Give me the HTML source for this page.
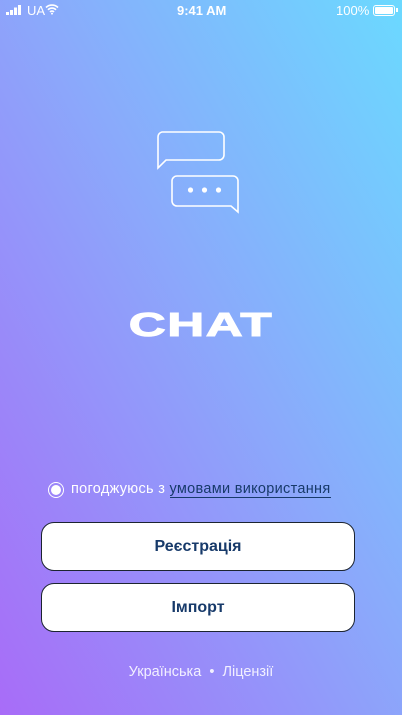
<!DOCTYPE html>
<html><head><meta charset="utf-8"><style>
*{margin:0;padding:0;box-sizing:border-box}
body{width:402px;height:715px;overflow:hidden;position:relative;font-family:"Liberation Sans",sans-serif;
background:linear-gradient(to bottom left,#6bd9ff 0%,#8aaafb 45%,#9a88f9 75%,#a86cf8 100%);color:#fff}
.sb{position:absolute;top:0;left:0;width:402px;height:22px;font-size:13px}
.abs{position:absolute}
.btn{position:absolute;left:41px;width:314px;height:49px;background:#fff;border:1px solid #1c2430;border-radius:13px;
color:#173a6a;font-weight:bold;font-size:16px;display:flex;align-items:center;justify-content:center}
</style></head><body>
<div class="sb">
<svg class="abs" style="left:6px;top:5px" width="18" height="10"><rect x="0" y="7" width="3" height="3" fill="#fff"/><rect x="4" y="5" width="3" height="5" fill="#fff"/><rect x="8" y="2.5" width="3" height="7.5" fill="#fff"/><rect x="12" y="0" width="3" height="10" fill="#fff"/></svg>
<span class="abs" style="left:27px;top:3px">UA</span>
<svg class="abs" style="left:45px;top:4px" width="14" height="11" viewBox="0 0 14 11"><path d="M1 3.5a8.5 8.5 0 0 1 12 0M3 5.8a5.5 5.5 0 0 1 8 0M5 8a2.6 2.6 0 0 1 4 0" stroke="#fff" stroke-width="1.6" fill="none"/><circle cx="7" cy="9.6" r="1" fill="#fff"/></svg>
<span class="abs" style="left:177px;top:3px;font-weight:bold;font-size:13px">9:41 AM</span>
<span class="abs" style="left:336px;top:3px">100%</span>
<div class="abs" style="left:373px;top:5px;width:22px;height:11px;border:1px solid #fff;border-radius:3px;padding:1px"><div style="background:#fff;width:100%;height:100%;border-radius:1px"></div></div>
<div class="abs" style="left:396px;top:8px;width:1.5px;height:4px;background:#fff"></div>
</div>
<svg class="abs" style="left:150px;top:125px" width="100" height="95" viewBox="150 125 100 95">
<path d="M162 132H219a5 5 0 0 1 5 5V155a5 5 0 0 1-5 5H166l-8 8V137a5 5 0 0 1 4-5z" fill="none" stroke="#fff" stroke-width="1.6"/>
<path d="M177 176H233a5 5 0 0 1 5 5V212l-7-6H177a5 5 0 0 1-5-5V181a5 5 0 0 1 5-5z" fill="none" stroke="#fff" stroke-width="1.6"/>
<circle cx="190.5" cy="190" r="2.6" fill="#fff"/><circle cx="204.5" cy="190" r="2.6" fill="#fff"/><circle cx="218.5" cy="190" r="2.6" fill="#fff"/>
</svg>
<div class="abs" style="left:101px;top:306px;width:200px;text-align:center;font-size:33px;font-weight:900;letter-spacing:1px;-webkit-text-stroke:1px #fff;transform:scaleX(1.55);transform-origin:center">CHAT</div>
<div class="abs" style="left:48px;top:482px;width:16px;height:16px;border-radius:50%;border:1.5px solid #fff;padding:2px"><div style="width:100%;height:100%;border-radius:50%;background:#fff"></div></div>
<div class="abs" style="left:71px;top:481px;font-size:14.5px;letter-spacing:0.3px">погоджуюсь з <span style="color:#173a6a;border-bottom:1px solid #173a6a">умовами використання</span></div>
<div class="btn" style="top:522px">Реєстрація</div>
<div class="btn" style="top:583px">Імпорт</div>
<div class="abs" style="left:0;width:402px;top:664px;text-align:center;font-size:14.5px;color:#f2f0ff">Українська &nbsp;•&nbsp; Ліцензії</div>
</body></html>
